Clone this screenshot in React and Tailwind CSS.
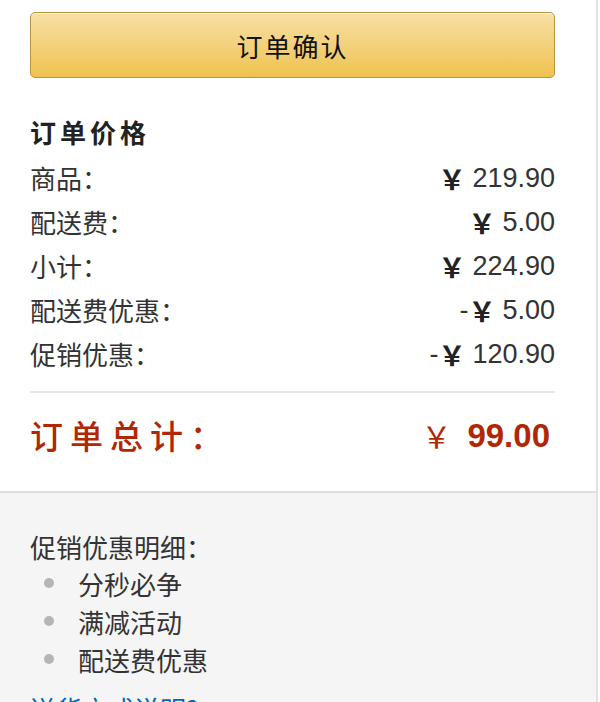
import React from 'react';

const cjk = { fontFamily: '"Noto Sans CJK SC", "Noto Sans", sans-serif' };

const rows = [
  { label: '商品：', sign: '', value: '219.90' },
  { label: '配送费：', sign: '', value: '5.00' },
  { label: '小计：', sign: '', value: '224.90' },
  { label: '配送费优惠：', sign: '-', value: '5.00' },
  { label: '促销优惠：', sign: '-', value: '120.90' },
];

const promos = ['分秒必争', '满减活动', '配送费优惠'];

const Amount = ({ sign, value }) => (
  <span className="flex items-center text-[#333] font-['Liberation_Sans',Arial,sans-serif] text-[27px]">
    {sign && <span>{sign}</span>}
    <span className="font-['Noto_Sans_CJK_SC',sans-serif] font-bold text-[27px] leading-none text-[#222]">￥</span>
    <span className="ml-[7px]">{value}</span>
  </span>
);

export default function App() {
  return (
    <div
      className="w-[598px] min-h-screen flex flex-col bg-white border-r-2 border-[#e3e3e3] text-[#333]"
      style={cjk}
    >
      <div className="pl-[30px] pr-[41px] pt-[12px] pb-[31px] border-b-2 border-[#dddddd]">
        <button className="w-full h-[66px] rounded-[5px] border border-[#b8953b] bg-gradient-to-b from-[#f7e0a4] to-[#efc24c] shadow-[inset_0_1px_0_rgba(255,255,255,0.6)] text-[26px] tracking-[2px] text-[#111]">
          订单确认
        </button>

        <div className="mt-[39px] h-[30px] leading-[30px] text-[26px] font-bold tracking-[4px] text-[#222]">
          订单价格
        </div>

        <div className="mt-[9px] flex flex-col">
          {rows.map((r) => (
            <div key={r.label} className="h-[44px] flex items-center justify-between">
              <span className="text-[26px] leading-none">{r.label}</span>
              <Amount sign={r.sign} value={r.value} />
            </div>
          ))}
        </div>

        <div className="mt-[15px] h-[2px] bg-[#e7e7e7]" />

        <div className="mt-[17px] h-[50px] flex items-center justify-between text-[#b12704]">
          <span className="text-[33px] font-medium tracking-[7px] leading-none">订单总计：</span>
          <span className="flex items-center pr-[5px]">
            <span className="text-[30px] leading-none">￥</span>
            <span className="ml-[16px] font-['Liberation_Sans',Arial,sans-serif] font-bold text-[33px] leading-none">
              99.00
            </span>
          </span>
        </div>
      </div>

      <div className="flex-1 bg-[#f5f5f5] pl-[30px] pt-[35px]">
        <div className="h-[36px] flex items-center text-[26px]">促销优惠明细：</div>
        <ul>
          {promos.map((p) => (
            <li key={p} className="h-[38px] flex items-center text-[26px]">
              <span className="ml-[14px] w-[10px] h-[10px] rounded-full bg-[#b5b5b5]" />
              <span className="ml-[24px]">{p}</span>
            </li>
          ))}
        </ul>
        <div className="mt-[14px] h-[32px] flex items-center text-[26px] text-[#0066c0]">
          送货方式说明?
        </div>
      </div>
    </div>
  );
}
